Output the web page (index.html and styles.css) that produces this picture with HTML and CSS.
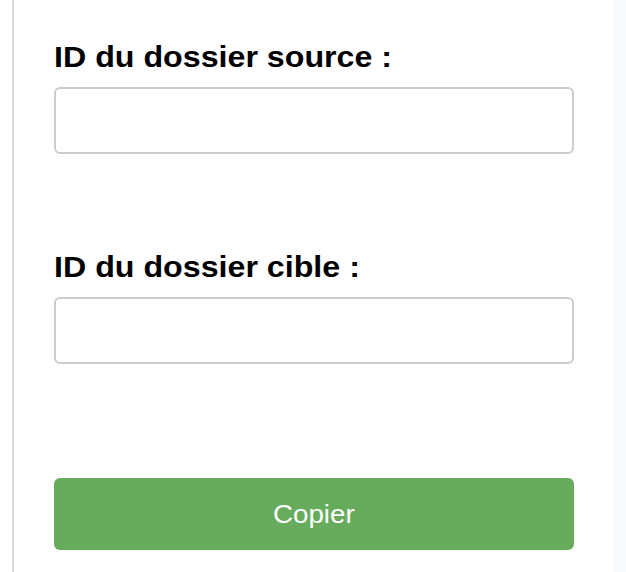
FILE: index.html
```html
<!DOCTYPE html>
<html lang="fr">
<head>
<meta charset="utf-8">
<title>Copier dossier</title>
<link rel="stylesheet" href="styles.css">
</head>
<body>
<div class="layout">
  <div class="panel">
    <form class="form">
      <div class="field">
        <label class="label" for="source"><span class="stretch">ID du dossier source :</span></label>
        <input class="input" id="source" type="text">
      </div>
      <div class="field field-second">
        <label class="label" for="cible"><span class="stretch">ID du dossier cible :</span></label>
        <input class="input" id="cible" type="text">
      </div>
      <button class="button" type="button"><span class="stretch stretch-center">Copier</span></button>
    </form>
  </div>
  <div class="side"></div>
</div>
</body>
</html>
```

FILE: styles.css
```css
html, body {
  margin: 0;
  padding: 0;
  height: 100%;
}
body {
  background: #ffffff;
  font-family: "Liberation Sans", Arial, Helvetica, sans-serif;
}
.layout {
  display: flex;
  min-height: 100%;
  padding-left: 12px;
  box-sizing: border-box;
}
.panel {
  width: 602px;
  flex: none;
  box-sizing: border-box;
  border-left: 2px solid #d9d9d9;
  background: #ffffff;
  padding: 40px 40px 0 40px;
}
.side {
  flex: 1;
  background: #f8f9fb;
}
.form {
  display: flex;
  flex-direction: column;
}
.field {
  display: flex;
  flex-direction: column;
}
.field-second {
  margin-top: 96px;
}
.label {
  font-size: 29px;
  line-height: 34px;
  font-weight: bold;
  color: #000;
  margin-bottom: 13px;
}
.stretch {
  display: inline-block;
  transform: scaleX(1.11);
  transform-origin: left center;
}
.stretch-center {
  transform-origin: center center;
}
.input {
  width: 520px;
  height: 67px;
  box-sizing: border-box;
  border: 2px solid #cccccc;
  border-radius: 6px;
  background: #fff;
  margin: 0;
  padding: 0 12px;
  font-size: 24px;
  font-family: inherit;
  outline: none;
}
.button {
  margin-top: 114px;
  width: 520px;
  height: 72px;
  border: none;
  border-radius: 6px;
  background: #67ac5c;
  color: #ffffff;
  font-family: inherit;
  font-size: 25px;
  padding: 0;
  cursor: pointer;
}
```
